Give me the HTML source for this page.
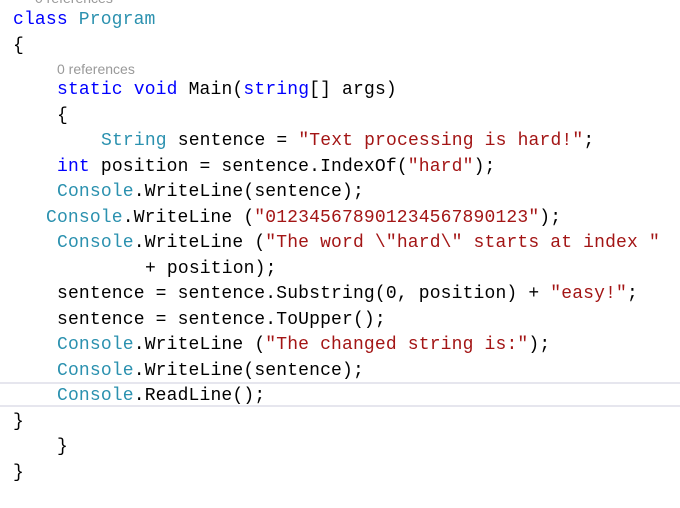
<!DOCTYPE html>
<html><head><meta charset="utf-8"><style>
html,body{margin:0;padding:0;background:#fff;width:680px;height:508px;overflow:hidden;position:relative}
.l{position:absolute;white-space:pre;font-family:"Liberation Mono",monospace;font-size:18px;letter-spacing:0.16px;color:#000;line-height:20px}
.r{position:absolute;white-space:pre;font-family:"Liberation Sans",sans-serif;font-size:14px;color:#999;line-height:16px}
.k{color:#0000ff}.t{color:#2b91af}.s{color:#a31515}
.hl{position:absolute;left:0;width:680px;height:2px;background:#e6e6ee}
</style></head><body>
<div class="r" style="left:35px;top:-10px">0 references</div>
<div class="l" style="left:13px;top:10px"><span class="k">class</span> <span class="t">Program</span></div>
<div class="l" style="left:13px;top:36px">{</div>
<div class="r" style="left:57px;top:61px">0 references</div>
<div class="l" style="left:57px;top:80px"><span class="k">static</span> <span class="k">void</span> Main(<span class="k">string</span>[] args)</div>
<div class="l" style="left:57px;top:106px">{</div>
<div class="l" style="left:101px;top:131px"><span class="t">String</span> sentence = <span class="s">"Text processing is hard!"</span>;</div>
<div class="l" style="left:57px;top:157px"><span class="k">int</span> position = sentence.IndexOf(<span class="s">"hard"</span>);</div>
<div class="l" style="left:57px;top:182px"><span class="t">Console</span>.WriteLine(sentence);</div>
<div class="l" style="left:46px;top:208px"><span class="t">Console</span>.WriteLine (<span class="s">"012345678901234567890123"</span>);</div>
<div class="l" style="left:57px;top:233px"><span class="t">Console</span>.WriteLine (<span class="s">"The word \"hard\" starts at index "</span></div>
<div class="l" style="left:145px;top:259px">+ position);</div>
<div class="l" style="left:57px;top:284px">sentence = sentence.Substring(0, position) + <span class="s">"easy!"</span>;</div>
<div class="l" style="left:57px;top:310px">sentence = sentence.ToUpper();</div>
<div class="l" style="left:57px;top:335px"><span class="t">Console</span>.WriteLine (<span class="s">"The changed string is:"</span>);</div>
<div class="l" style="left:57px;top:361px"><span class="t">Console</span>.WriteLine(sentence);</div>
<div class="hl" style="top:382px"></div>
<div class="l" style="left:57px;top:386px"><span class="t">Console</span>.ReadLine();</div>
<div class="hl" style="top:405px"></div>
<div class="l" style="left:13px;top:412px">}</div>
<div class="l" style="left:57px;top:437px">}</div>
<div class="l" style="left:13px;top:463px">}</div>
</body></html>
